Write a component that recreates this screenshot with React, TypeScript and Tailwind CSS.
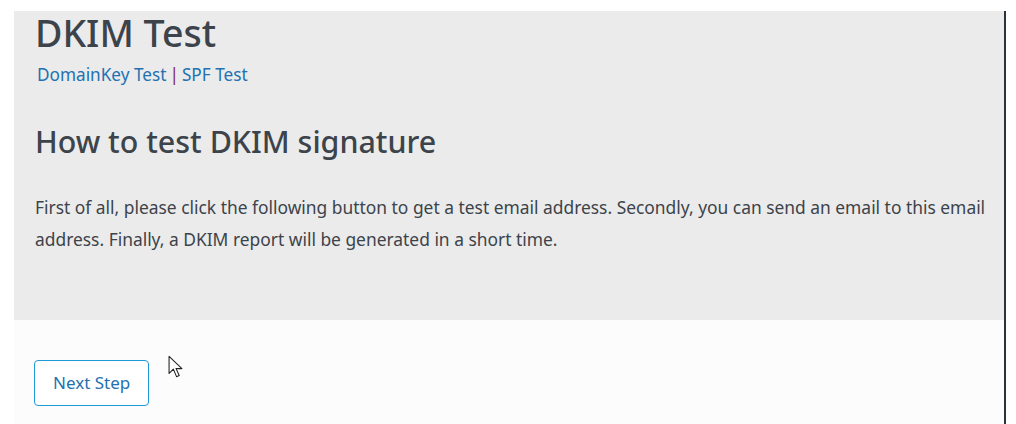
export default function App() {
  return (
    <div
      className="w-[1016px] h-[424px] bg-white pt-[11px] pl-[14px] flex overflow-hidden"
      style={{ fontFamily: '"Noto Sans", "Open Sans", sans-serif' }}
    >
      <div className="w-[990px] flex flex-col">
        {/* Header panel */}
        <div className="bg-[#ebebeb] h-[309px] pl-[21px] pr-[2px]">
          <h1 className="text-[37.5px] leading-[42px] font-medium text-[#3c434a] mt-[1px]">DKIM Test</h1>
          <div className="text-[17.2px] leading-[22px] mt-[10px] pl-[2px] text-[#2271b1]">
            <a href="#" className="text-[#2271b1]">DomainKey Test</a>
            <span className="text-[#7a1f5c] mx-[3px]">|</span>
            <a href="#" className="text-[#2271b1]">SPF Test</a>
          </div>
          <h2 className="text-[30.4px] leading-[36px] font-medium text-[#3c434a] mt-[38px]">
            How to test DKIM signature
          </h2>
          <p className="text-[17.4px] leading-[32px] text-[#3c434a] mt-[31px]">
            First of all, please click the following button to get a test email address. Secondly, you can send an email to this email address. Finally, a DKIM report will be generated in a short time.
          </p>
        </div>
        {/* Action area */}
        <div className="flex-1 bg-[#fcfcfc] pl-[20px] pt-[40px] relative">
          <button className="h-[46px] px-[18px] border border-[#1e9ad6] rounded-[4px] bg-white text-[#2271b1] text-[17px]">
            Next Step
          </button>
          <svg className="absolute left-[154px] top-[35px]" width="15" height="24" viewBox="0 0 14 22">
            <path d="M1 1 L1 17 L5 13 L8 20 L10.5 19 L7.5 12.5 L13 12.5 Z" fill="white" stroke="#222" strokeWidth="1" strokeLinejoin="round" />
          </svg>
        </div>
      </div>
      <div className="w-[2px] bg-[#2c3338]" />
    </div>
  );
}
